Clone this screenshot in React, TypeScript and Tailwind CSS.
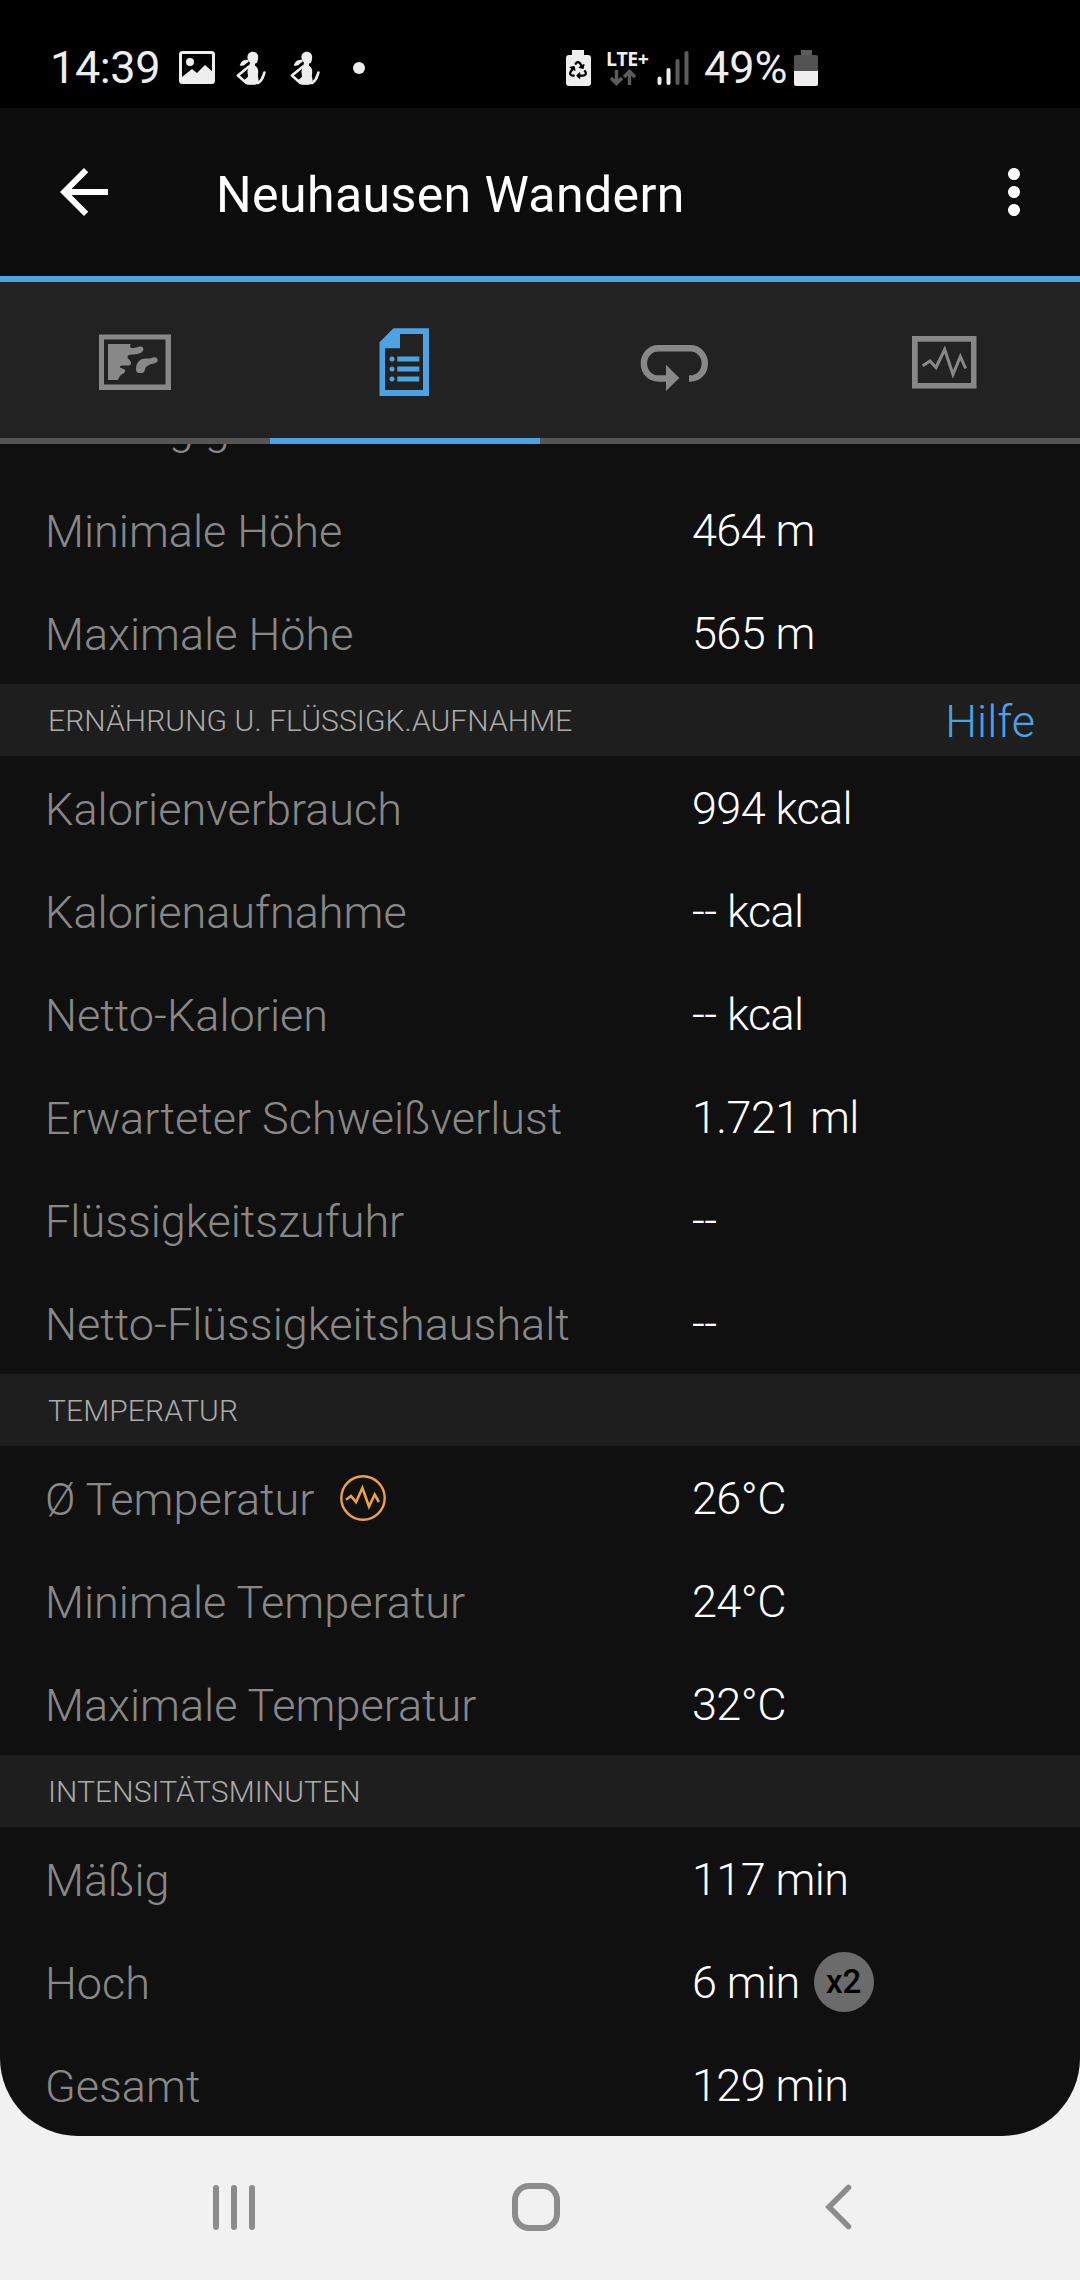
import type { ReactNode } from "react";
import { FaRecycle } from "react-icons/fa";
import { MdArrowBack, MdMoreVert } from "react-icons/md";

type Row = {
  label: string;
  value: string;
  chart?: boolean;
  badge?: string;
};

type Section = {
  title: string;
  action?: string;
  rows: Row[];
};

const elevationRows: Row[] = [
  { label: "Abstieg gesamt", value: "" },
  { label: "Minimale Höhe", value: "464 m" },
  { label: "Maximale Höhe", value: "565 m" },
];

const sections: Section[] = [
  {
    title: "ERNÄHRUNG U. FLÜSSIGK.AUFNAHME",
    action: "Hilfe",
    rows: [
      { label: "Kalorienverbrauch", value: "994 kcal" },
      { label: "Kalorienaufnahme", value: "-- kcal" },
      { label: "Netto-Kalorien", value: "-- kcal" },
      { label: "Erwarteter Schweißverlust", value: "1.721 ml" },
      { label: "Flüssigkeitszufuhr", value: "--" },
      { label: "Netto-Flüssigkeitshaushalt", value: "--" },
    ],
  },
  {
    title: "TEMPERATUR",
    rows: [
      { label: "Ø Temperatur", value: "26°C", chart: true },
      { label: "Minimale Temperatur", value: "24°C" },
      { label: "Maximale Temperatur", value: "32°C" },
    ],
  },
  {
    title: "INTENSITÄTSMINUTEN",
    rows: [
      { label: "Mäßig", value: "117 min" },
      { label: "Hoch", value: "6 min", badge: "x2" },
      { label: "Gesamt", value: "129 min" },
    ],
  },
];

function PictureIcon() {
  return (
    <svg viewBox="0 0 36 33" className="h-[33px] w-9 shrink-0">
      <rect x="1.5" y="1.5" width="33" height="30" rx="2" fill="none" stroke="#eee" strokeWidth="3" />
      <circle cx="11" cy="11" r="4" fill="#eee" />
      <path d="M3 26 13 18l5 4 8-8 8 7v10H3z" fill="#eee" />
    </svg>
  );
}

function TrainerIcon() {
  return (
    <svg viewBox="618 58 90 104" className="h-[34px] w-[30px] shrink-0" fill="#eee">
      <path d="M668 60c10 0 17 7 17 16 0 5-1 9-2 13-1 5-4 7-8 7h-9c-8-2-14-10-14-19 0-10 7-17 16-17z" />
      <path d="M654 85c-8-1-18 2-21 8l-5 9c9 3 16 0 19-5l9-6z" />
      <path d="M661 90h14v12c8 5 11 13 10 21l-1 12c2 8 3 15 1 20l-10 6h-22l-13-12 14-12-2-16z" />
      <path
        d="M656 106 623 133l26 23h36c8-6 14-15 17-26l2-6"
        fill="none"
        stroke="#eee"
        strokeWidth="8"
        strokeLinejoin="round"
        strokeLinecap="round"
      />
    </svg>
  );
}

function PowerSaveIcon() {
  return (
    <div className="flex h-9 w-[26px] shrink-0 flex-col items-center">
      <div className="h-[5px] w-3 bg-[#eee]" />
      <div className="flex h-[31px] w-[25px] items-center justify-center rounded-[3px] bg-[#eee]">
        <FaRecycle className="size-[18px] text-black" />
      </div>
    </div>
  );
}

function SignalIcon() {
  return (
    <svg viewBox="0 0 32 35" className="h-[35px] w-8 shrink-0" strokeWidth="4" strokeLinecap="round">
      <path d="M2.5 28.5V33M11.5 20V33" stroke="#eee" />
      <path d="M20.5 11V33M29.5 3V33" stroke="#5c5c5c" />
    </svg>
  );
}

function StatusBar() {
  return (
    <div className="flex h-[108px] items-center bg-black pb-[14px] pt-[41px] pl-[50px] pr-[262px] text-[#eee]">
      <span className="w-[129px] whitespace-nowrap text-[45px] leading-[53px] tracking-[-0.4px]">14:39</span>
      <PictureIcon />
      <div className="ml-[21px] flex gap-6">
        <TrainerIcon />
        <TrainerIcon />
      </div>
      <div className="ml-[33px] size-3 rounded-full bg-[#eee]" />
      <div className="ml-auto flex items-center">
        <PowerSaveIcon />
        <div className="ml-[15px] flex w-[43px] flex-col">
          <span className="whitespace-nowrap font-['Open_Sans'] text-[19.5px] font-bold leading-5 tracking-[-0.5px]">LTE+</span>
          <svg viewBox="0 0 26 17" className="ml-1 h-[17px] w-[26px]" fill="none" stroke="#5c5c5c" strokeWidth="3.4">
            <path d="M6.5 1v13M1 9l5.5 5.5L12 9M19.5 16V3M14 8l5.5-5.5L25 8" />
          </svg>
        </div>
        <div className="ml-2">
          <SignalIcon />
        </div>
        <span className="ml-[15px] w-[90px] whitespace-nowrap text-[45px] leading-[53px]">49%</span>
        <div className="flex h-9 w-6 flex-col items-center">
          <div className="h-[5px] w-[11px] bg-[#5c5c5c]" />
          <div className="h-4 w-6 rounded-t-[2px] bg-[#525252]" />
          <div className="h-[15px] w-6 rounded-b-[2px] bg-[#eee]" />
        </div>
      </div>
    </div>
  );
}

function Tab({ active, children }: { active?: boolean; children: ReactNode }) {
  return (
    <button
      className={
        active
          ? "flex flex-1 items-center justify-center border-b-[6px] border-[#4ca3e4] text-[#4ca3e4]"
          : "flex flex-1 items-center justify-center border-b-[6px] border-[#555] text-[#888]"
      }
    >
      <svg viewBox="0 0 72 72" className="size-[72px]" fill="currentColor">
        {children}
      </svg>
    </button>
  );
}

function Tabs() {
  return (
    <div className="flex h-[162px] shrink-0 bg-[#222]">
      <Tab>
        <path d="M0 10.5H72V66H0zM5 15.5V60.5H66.5V15.5z" fillRule="evenodd" />
        <path d="M9 20H32c-2 2-1 4 2 4 4 0 5-2 8-1.5 3 .5 3 4 1 5.500-4 3-9 2-13 3-2 .8-2 3 0 4.500 2 1.500 3 4.500 1 5.500-3 1.500-6-.5-9.500 1-1.500 1 0 2 2 2.500 2.500.7 3.500 2 2 4-1.500 1.500-3 1.500-4.500 3.500-1 1.500-1.500 2.500-2 4H9z" />
        <path d="M37 45c0-4 1.500-7.500 5-9.500 4-2 8 0 12-2 2.500-1 4.700.2 4.700 2.500s-2 3-4 3.500c-3 .8-6 1.500-8 4-1 2-.7 5-3.700 5.500-4 .5-6-.5-6-4z" />
      </Tab>
      <Tab active>
        <path d="M24.5 4.300H60V72H10.500V18.300zM31 10V24.300H16V66H54V10z" fillRule="evenodd" />
        <circle cx="23" cy="35" r="2.5" />
        <circle cx="23" cy="45" r="2.5" />
        <circle cx="23" cy="55" r="2.5" />
        <path d="M28.300 32.500h22v5h-22zM28.300 42.500h22v5h-22zM28.300 52.500h22v5h-22z" />
      </Tab>
      <Tab>
        <path
          d="M50 54.500h1.500c8 0 14.300-6.700 14.300-15.100s-6.300-15.100-14.300-15.100H19.200c-8 0-14.300 6.700-14.300 15.100s6.300 15.100 14.300 15.100H28"
          fill="none"
          stroke="currentColor"
          strokeWidth="6.4"
        />
        <path d="M27 40.700 40.300 54 27 67z" />
      </Tab>
      <Tab>
        <path d="M3 12H67.500V64.500H3zM8.700 17.700V59H62V17.700z" fillRule="evenodd" />
        <path
          d="M13.700 41.700 21 37l6 6.500 8.700-18 8.300 25 7.300-18 5.400 12"
          fill="none"
          stroke="currentColor"
          strokeWidth="3"
        />
      </Tab>
    </div>
  );
}

function ChartBadge() {
  return (
    <svg viewBox="0 0 46 46" className="ml-[26px] size-[46px]" fill="none" stroke="#f0a040">
      <circle cx="23" cy="23" r="21.7" strokeWidth="2.4" />
      <path d="M6 24.700 11 21l5 6 6.400-14L29 31.500l5.700-12 4.200 7.500" strokeWidth="2.6" />
    </svg>
  );
}

function DetailRow({ row }: { row: Row }) {
  return (
    <div className="flex h-[103px] shrink-0 items-center pl-[45px] text-[45px] font-light">
      <div className="flex w-[647px] items-center whitespace-nowrap text-[#888]">
        <span className="pt-[5px]">{row.label}</span>
        {row.chart && <ChartBadge />}
      </div>
      <div className="flex items-center whitespace-nowrap text-white">
        <span className="pt-[3px] tracking-[-0.6px]">{row.value}</span>
        {row.badge && (
          <span className="ml-[14px] flex size-[60px] items-center justify-center rounded-full bg-[#6b6b6b] text-[33px] font-medium text-black">
            {row.badge}
          </span>
        )}
      </div>
    </div>
  );
}

export default function App() {
  return (
    <div className="flex h-[2280px] w-[1080px] flex-col overflow-hidden bg-[#f1f1f1] font-[Roboto,sans-serif]">
      <div className="flex h-[2136px] flex-col overflow-hidden rounded-b-[78px] bg-[#101010]">
        <StatusBar />

        <header className="flex h-[174px] shrink-0 items-center border-b-[6px] border-[#4ca3e4] bg-[#0c0c0c] pl-12 pr-[30px] text-white">
          <MdArrowBack className="size-[72px]" />
          <h1 className="ml-24 whitespace-nowrap pt-1.5 text-[50px] tracking-[0.4px]">Neuhausen Wandern</h1>
          <MdMoreVert className="ml-auto size-[72px]" />
        </header>

        <Tabs />

        <main className="flex flex-1 flex-col justify-end overflow-hidden">
          {elevationRows.map((row) => (
            <DetailRow key={row.label} row={row} />
          ))}
          {sections.map((section) => (
            <section key={section.title}>
              <div className="flex h-[72px] items-center justify-between bg-[#1e1e1e] pl-12 pr-[45px] font-light">
                <h2 className="text-[30px] tracking-[0.1px] text-[#aaa]">{section.title}</h2>
                {section.action && <a className="pt-[3px] text-[45px] text-[#4ca3e4]">{section.action}</a>}
              </div>
              {section.rows.map((row) => (
                <DetailRow key={row.label} row={row} />
              ))}
            </section>
          ))}
        </main>
      </div>

      <nav className="flex h-36 items-center pb-0.5 pl-[213px] text-[#8c8c8c]">
        <div className="flex w-[42px] justify-between">
          <span className="h-[45px] w-1.5 rounded-full bg-current" />
          <span className="h-[45px] w-1.5 rounded-full bg-current" />
          <span className="h-[45px] w-1.5 rounded-full bg-current" />
        </div>
        <div className="ml-[257px] size-12 rounded-[17px] border-[6px] border-current" />
        <svg viewBox="0 0 27 46" className="ml-[265px] h-[46px] w-[27px]" fill="none" stroke="currentColor" strokeWidth="5.5" strokeLinecap="round">
          <path d="M23.500 3.500 4 23l19.500 19.500" />
        </svg>
      </nav>
    </div>
  );
}
